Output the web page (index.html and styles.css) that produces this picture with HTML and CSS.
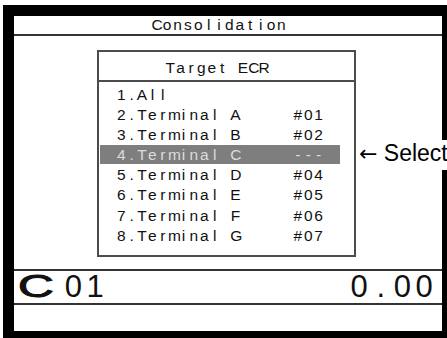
FILE: index.html
```html
<!DOCTYPE html>
<html lang="en">
<head>
<meta charset="utf-8">
<title>Consolidation</title>
<link rel="stylesheet" href="styles.css">
</head>
<body>
<div class="screen">
  <div class="title-bar">
    <div class="cells title"><span>C</span><span>o</span><span>n</span><span>s</span><span>o</span><span>l</span><span>i</span><span>d</span><span>a</span><span>t</span><span>i</span><span>o</span><span>n</span></div>
  </div>
  <div class="main">
    <div class="menu">
      <div class="menu-head">
        <div class="cells"><span>T</span><span>a</span><span>r</span><span>g</span><span>e</span><span>t</span><span> </span><span>E</span><span>C</span><span>R</span></div>
      </div>
      <div class="menu-list">
        <div class="row cells"><span>1</span><span>.</span><span>A</span><span>l</span><span>l</span></div>
        <div class="row cells"><span>2</span><span>.</span><span>T</span><span>e</span><span>r</span><span>m</span><span>i</span><span>n</span><span>a</span><span>l</span><span> </span><span>A</span><span> </span><span> </span><span> </span><span> </span><span> </span><span>#</span><span>0</span><span>1</span></div>
        <div class="row cells"><span>3</span><span>.</span><span>T</span><span>e</span><span>r</span><span>m</span><span>i</span><span>n</span><span>a</span><span>l</span><span> </span><span>B</span><span> </span><span> </span><span> </span><span> </span><span> </span><span>#</span><span>0</span><span>2</span></div>
        <div class="row cells selected"><span>4</span><span>.</span><span>T</span><span>e</span><span>r</span><span>m</span><span>i</span><span>n</span><span>a</span><span>l</span><span> </span><span>C</span><span> </span><span> </span><span> </span><span> </span><span> </span><span>-</span><span>-</span><span>-</span></div>
        <div class="row cells"><span>5</span><span>.</span><span>T</span><span>e</span><span>r</span><span>m</span><span>i</span><span>n</span><span>a</span><span>l</span><span> </span><span>D</span><span> </span><span> </span><span> </span><span> </span><span> </span><span>#</span><span>0</span><span>4</span></div>
        <div class="row cells"><span>6</span><span>.</span><span>T</span><span>e</span><span>r</span><span>m</span><span>i</span><span>n</span><span>a</span><span>l</span><span> </span><span>E</span><span> </span><span> </span><span> </span><span> </span><span> </span><span>#</span><span>0</span><span>5</span></div>
        <div class="row cells"><span>7</span><span>.</span><span>T</span><span>e</span><span>r</span><span>m</span><span>i</span><span>n</span><span>a</span><span>l</span><span> </span><span>F</span><span> </span><span> </span><span> </span><span> </span><span> </span><span>#</span><span>0</span><span>6</span></div>
        <div class="row cells"><span>8</span><span>.</span><span>T</span><span>e</span><span>r</span><span>m</span><span>i</span><span>n</span><span>a</span><span>l</span><span> </span><span>G</span><span> </span><span> </span><span> </span><span> </span><span> </span><span>#</span><span>0</span><span>7</span></div>
      </div>
    </div>
  </div>
  <div class="status">
    <span class="clerk-c">C</span>
    <div class="big-cells"><span>0</span><span>1</span></div>
    <div class="big-cells amount"><span>0</span><span>.</span><span>0</span><span>0</span></div>
  </div>
  <div class="foot"></div>
</div>
<div class="callout"><span class="arrow">←</span> Select</div>
</body>
</html>
```

FILE: styles.css
```css
html, body {
  margin: 0;
  padding: 0;
}

body {
  width: 447px;
  height: 338px;
  background: #fff;
  padding: 5px 0 0 3px;
  box-sizing: border-box;
  position: relative;
  overflow: hidden;
  font-family: "Liberation Sans", Arial, sans-serif;
  color: #111;
}

.screen {
  width: 444px;
  height: 333px;
  box-sizing: border-box;
  border-style: solid;
  border-color: #000;
  border-width: 11px 5px 7px 11px;
  display: flex;
  flex-direction: column;
  background: #fff;
  overflow: hidden;
}

.cells {
  display: flex;
  font-size: 15.5px;
}

.cells > span {
  flex: none;
  width: 10.4px;
  text-align: center;
  white-space: pre;
}

.title-bar {
  height: 18px;
  line-height: 18px;
  border-bottom: 2px solid #333;
  padding-left: 137.5px;
  flex: none;
}

.main {
  height: 233px;
  flex: none;
  padding: 14px 0 0 83px;
  box-sizing: border-box;
}

.menu {
  width: 259px;
  height: 207px;
  box-sizing: border-box;
  border: 2px solid #4c4c4c;
}

.menu-head {
  height: 30px;
  box-sizing: border-box;
  padding: 5px 0 0 66px;
  line-height: 22px;
  border-bottom: 2px solid #4c4c4c;
}

.menu-list {
  padding-top: 2.5px;
}

.row {
  height: 20.2px;
  line-height: 20.2px;
  width: 240px;
  margin-left: 1px;
  padding-left: 16px;
  box-sizing: border-box;
}

.row.selected {
  background: linear-gradient(#7e7e7e, #7e7e7e) 0 0 / 100% 19px no-repeat;
  color: #dcdcdc;
}

.status {
  flex: none;
  height: 36px;
  box-sizing: border-box;
  border-top: 2px solid #333;
  border-bottom: 2px solid #333;
  display: flex;
  align-items: flex-start;
  font-size: 31px;
  line-height: 32px;
  padding: 0 7px 0 0;
}

.clerk-c {
  display: inline-block;
  width: 44px;
  margin-left: 4px;
  font-size: 31px;
  transform: scaleX(1.6);
  transform-origin: left center;
  -webkit-text-stroke: 1px #111;
}

.big-cells {
  display: flex;
  margin-left: 0.6px;
}

.big-cells > span {
  flex: none;
  width: 21.7px;
  text-align: center;
}

.amount {
  margin-left: auto;
}

.foot {
  flex: 1;
}

.callout {
  position: absolute;
  left: 357px;
  top: 140px;
  width: 90px;
  height: 30px;
  background: #fff;
  padding-left: 2px;
  box-sizing: border-box;
  font-size: 23px;
  line-height: 26px;
  white-space: nowrap;
  color: #000;
}

.arrow {
  font-family: "DejaVu Sans", sans-serif;
  font-size: 22px;
}
```
